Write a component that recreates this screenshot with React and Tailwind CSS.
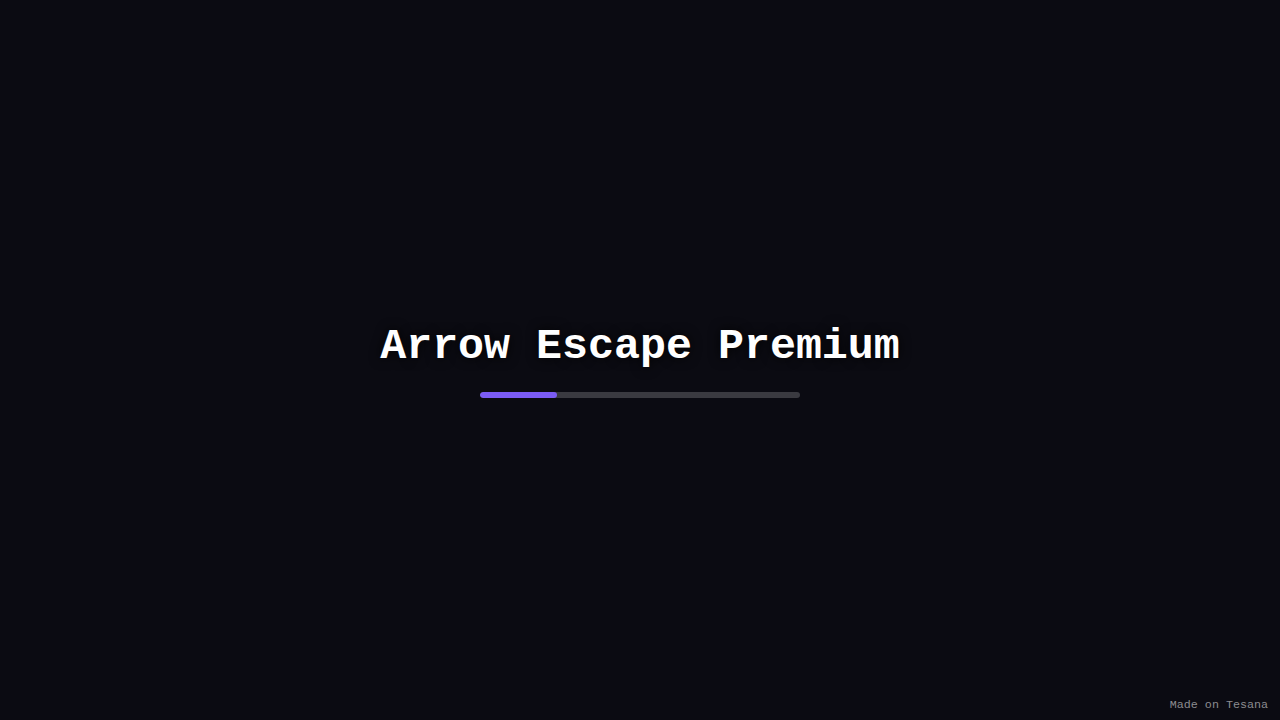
export default function App() {
  return (
    <div
      className="relative flex h-screen w-full flex-col items-center justify-center bg-[#0b0b12]"
      style={{ fontFamily: '"Liberation Mono", "DejaVu Sans Mono", monospace' }}
    >
      <h1 className="text-[43.3px] font-bold leading-[50px] text-white [text-shadow:0_0_12px_rgba(0,0,0,0.9)]">
        Arrow Escape Premium
      </h1>
      <div className="mt-[20px] h-[6px] w-[320px] overflow-hidden rounded-full bg-[#3a3a40]">
        <div className="h-full w-[24%] rounded-full bg-[#7b5cf5]" />
      </div>
      <div className="absolute bottom-[7px] right-[12px] text-[11.7px] leading-[16px] text-[#8c8c90]">
        Made on Tesana
      </div>
    </div>
  );
}
